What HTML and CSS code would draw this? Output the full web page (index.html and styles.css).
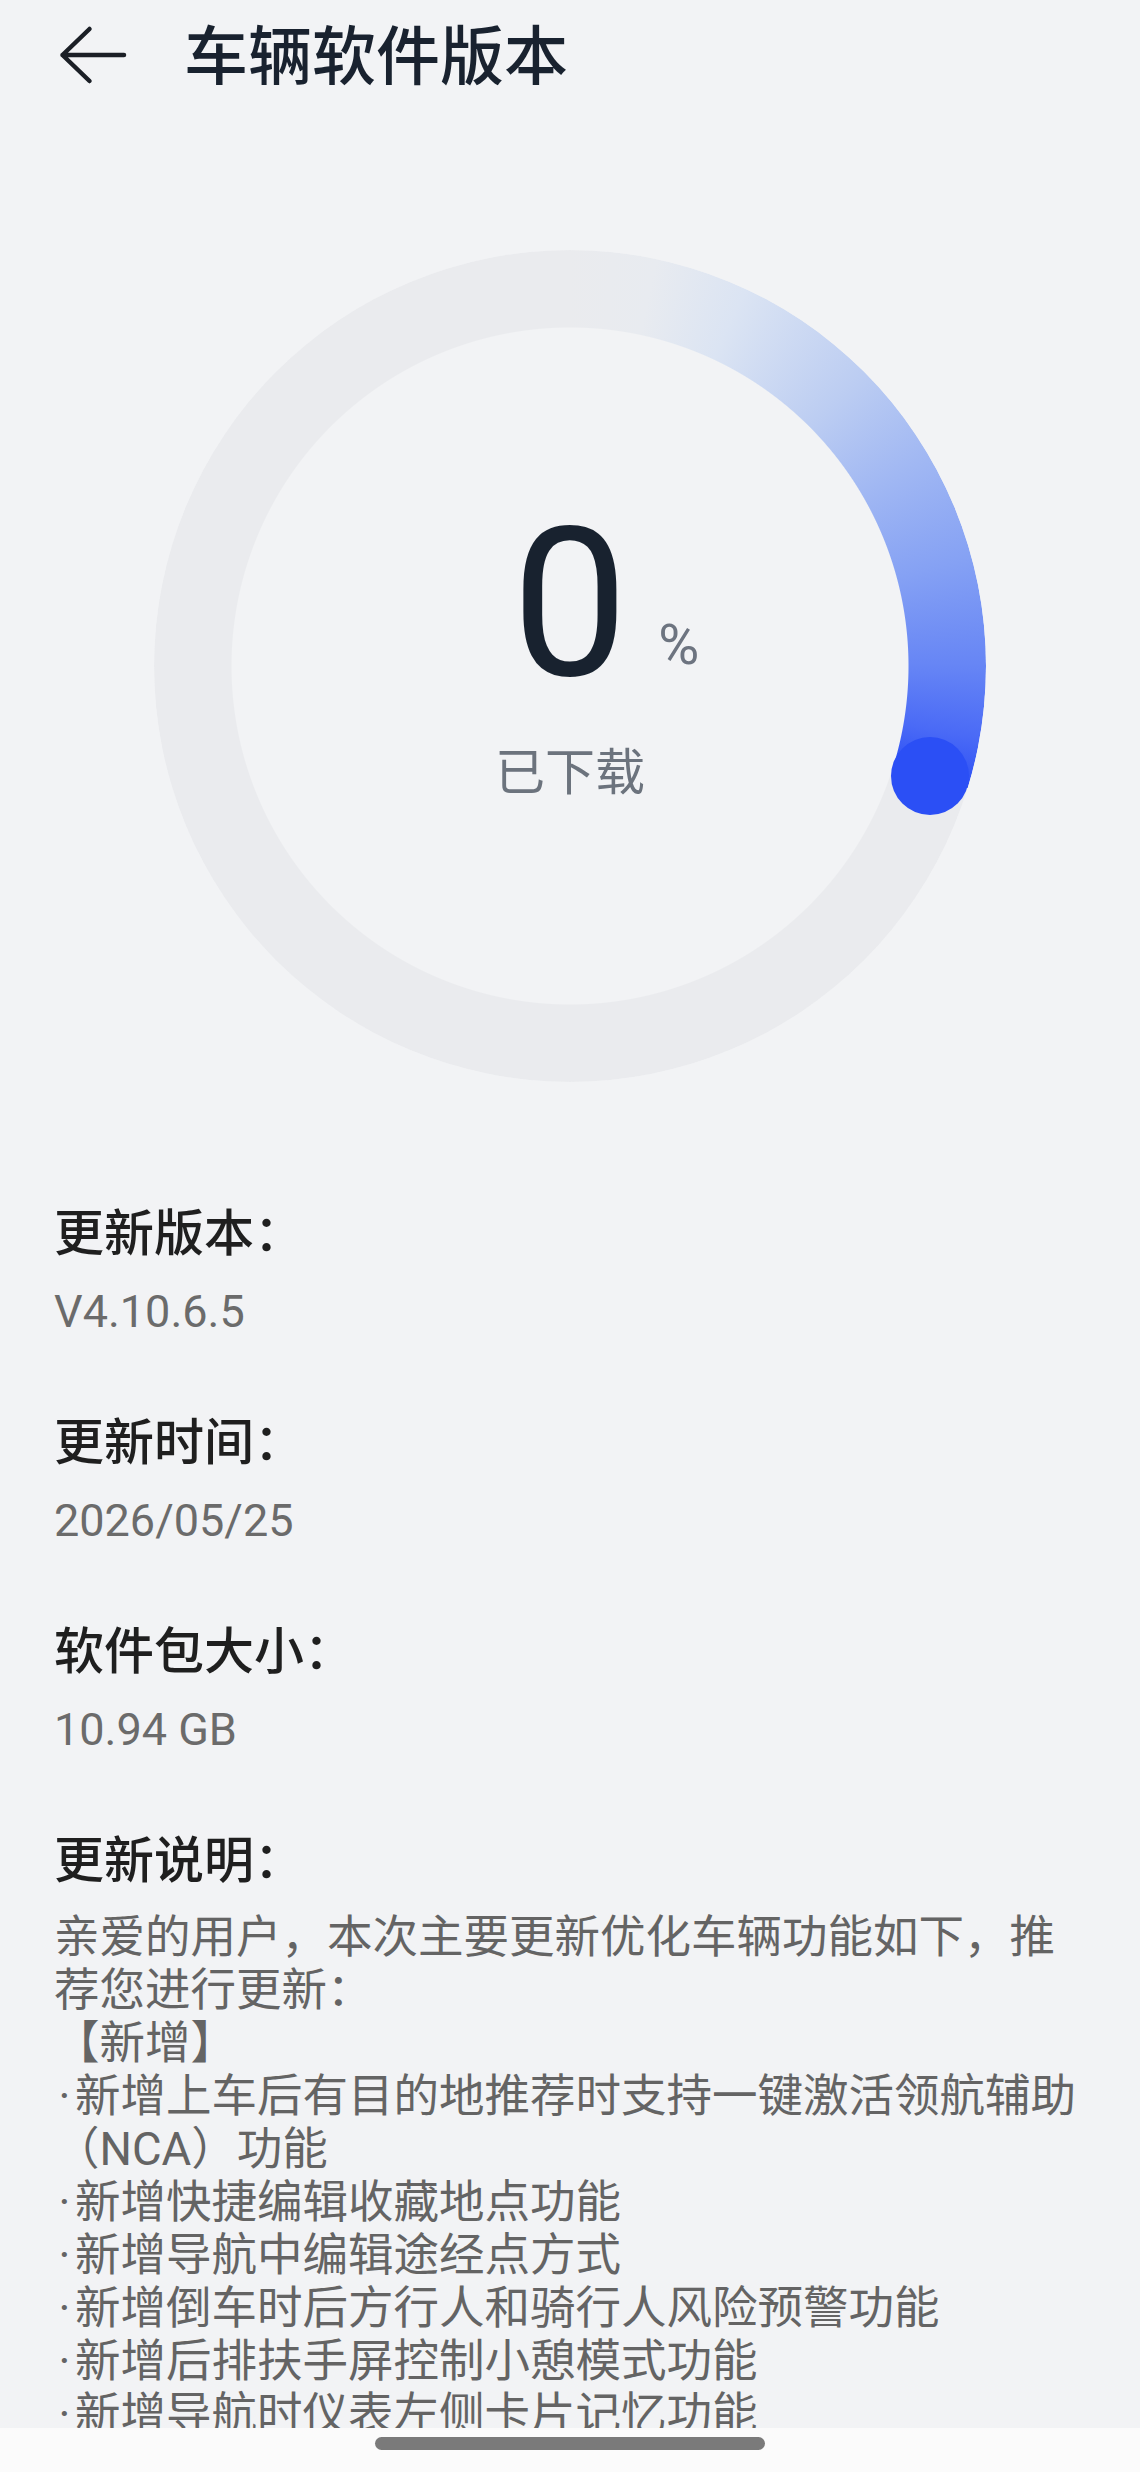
FILE: index.html
```html
<!DOCTYPE html>
<html lang="zh-CN">
<head>
    <meta charset="UTF-8">
    <meta name="viewport" content="width=device-width, initial-scale=1.0">
    <title>车辆软件版本</title>
    <link rel="stylesheet" href="styles.css">
</head>
<body>
    <div class="page">
        <div class="content">
            <header class="topbar">
                <svg class="back" width="74" height="60" viewBox="0 0 74 60">
                    <path d="M68 30H6.5M33.5 4L6.5 30L33.5 56" fill="none" stroke="#1b1f26" stroke-width="4.5" stroke-linecap="round" stroke-linejoin="round"/>
                </svg>
                <h1 class="title">车辆软件版本</h1>
            </header>

            <!-- download progress dial -->
            <div class="dial">
                <div class="ring"></div>
                <div class="cap"></div>
                <div class="readout">
                    <div class="num">0<span class="unit">%</span></div>
                    <div class="caption">已下载</div>
                </div>
            </div>

            <div class="info">
                <div class="item">
                    <div class="label">更新版本：</div>
                    <div class="value">V4.10.6.5</div>
                </div>
                <div class="item">
                    <div class="label">更新时间：</div>
                    <div class="value">2026/05/25</div>
                </div>
                <div class="item">
                    <div class="label">软件包大小：</div>
                    <div class="value">10.94 GB</div>
                </div>
                <div class="item">
                    <div class="label">更新说明：</div>
                    <div class="notes">
                        <p>亲爱的用户，本次主要更新优化车辆功能如下，推荐您进行更新：</p>
                        <p>【新增】</p>
                        <p><span class="dot">·</span>新增上车后有目的地推荐时支持一键激活领航辅助（NCA）功能</p>
                        <p><span class="dot">·</span>新增快捷编辑收藏地点功能</p>
                        <p><span class="dot">·</span>新增导航中编辑途经点方式</p>
                        <p><span class="dot">·</span>新增倒车时后方行人和骑行人风险预警功能</p>
                        <p><span class="dot">·</span>新增后排扶手屏控制小憩模式功能</p>
                        <p><span class="dot">·</span>新增导航时仪表左侧卡片记忆功能</p>
                    </div>
                </div>
            </div>
        </div>
        <div class="gesture"><div class="pill"></div></div>
    </div>
</body>
</html>
```

FILE: styles.css
```css
body{
    margin: 0;
    background: #f2f3f5;
    font-family: Roboto, "Noto Sans CJK SC", sans-serif;
}
.page{
    height: 2472px;
    display: flex;
    flex-direction: column;
    overflow: hidden;
}
.content{
    flex: 1;
    min-height: 0;
    overflow: hidden;
}
/* top bar */
.topbar{
    height: 110px;
    display: flex;
    align-items: center;
}
.back{
    margin-left: 56px;
    flex: none;
}
.title{
    margin: 0 0 8px 54px;
    font-family: "Noto Sans CJK SC", sans-serif;
    font-size: 64px;
    font-weight: 500;
    line-height: 80px;
    color: #19222f;
}
/* dial */
.dial{
    position: relative;
    width: 832px;
    height: 832px;
    margin: 140px auto 0;
}
.ring{
    position: absolute;
    inset: 0;
    border-radius: 50%;
    background: conic-gradient(#eaebee 0deg, #e8ebf0 12deg, #dbe4f3 25deg, #bccdf2 45deg, #a0b7f3 60deg, #85a1f4 75deg, #6685f5 90deg, #4a6af6 100deg, #2d50f5 107deg, #eaebee 107deg);
    -webkit-mask: radial-gradient(closest-side, transparent calc(100% - 78px), #000 calc(100% - 77px));
    mask: radial-gradient(closest-side, transparent calc(100% - 78px), #000 calc(100% - 77px));
}
.cap{
    position: absolute;
    left: 737px;
    top: 487px;
    width: 78px;
    height: 78px;
    border-radius: 50%;
    background: #2b4ff5;
}
.readout{
    position: absolute;
    inset: 0;
    display: flex;
    flex-direction: column;
    align-items: center;
    justify-content: center;
    padding-bottom: 28px;
    box-sizing: border-box;
}
.num{
    position: relative;
    font-size: 207px;
    font-weight: 400;
    line-height: 1;
    color: #18222f;
}
.unit{
    position: absolute;
    left: calc(100% + 30px);
    bottom: 35px;
    font-size: 56px;
    font-weight: 400;
    line-height: 1;
    color: #6d7480;
}
.caption{
    margin-top: 35px;
    font-size: 50px;
    line-height: 60px;
    color: #6c737d;
}
/* details */
.info{
    margin-top: 117px;
    padding: 0 56px 0 54px;
}
.item{
    margin-bottom: 70px;
}
.label{
    font-size: 50px;
    font-weight: 500;
    line-height: 70px;
    color: #1f1f1f;
}
.value{
    margin-top: 16px;
    font-size: 45px;
    line-height: 53px;
    color: #6b6b6b;
}
.notes{
    margin-top: 15px;
    font-size: 45.5px;
    line-height: 53px;
    color: #646464;
}
.notes p{
    margin: 0;
}
.dot{
    display: inline-block;
    width: 21px;
    text-align: center;
}
.gesture{
    flex: none;
    height: 44px;
    background: #fbfbfb;
    box-sizing: border-box;
    padding-top: 9px;
}
.pill{
    width: 390px;
    height: 13px;
    margin: 0 auto;
    border-radius: 7px;
    background: #7a7a7a;
}
```
